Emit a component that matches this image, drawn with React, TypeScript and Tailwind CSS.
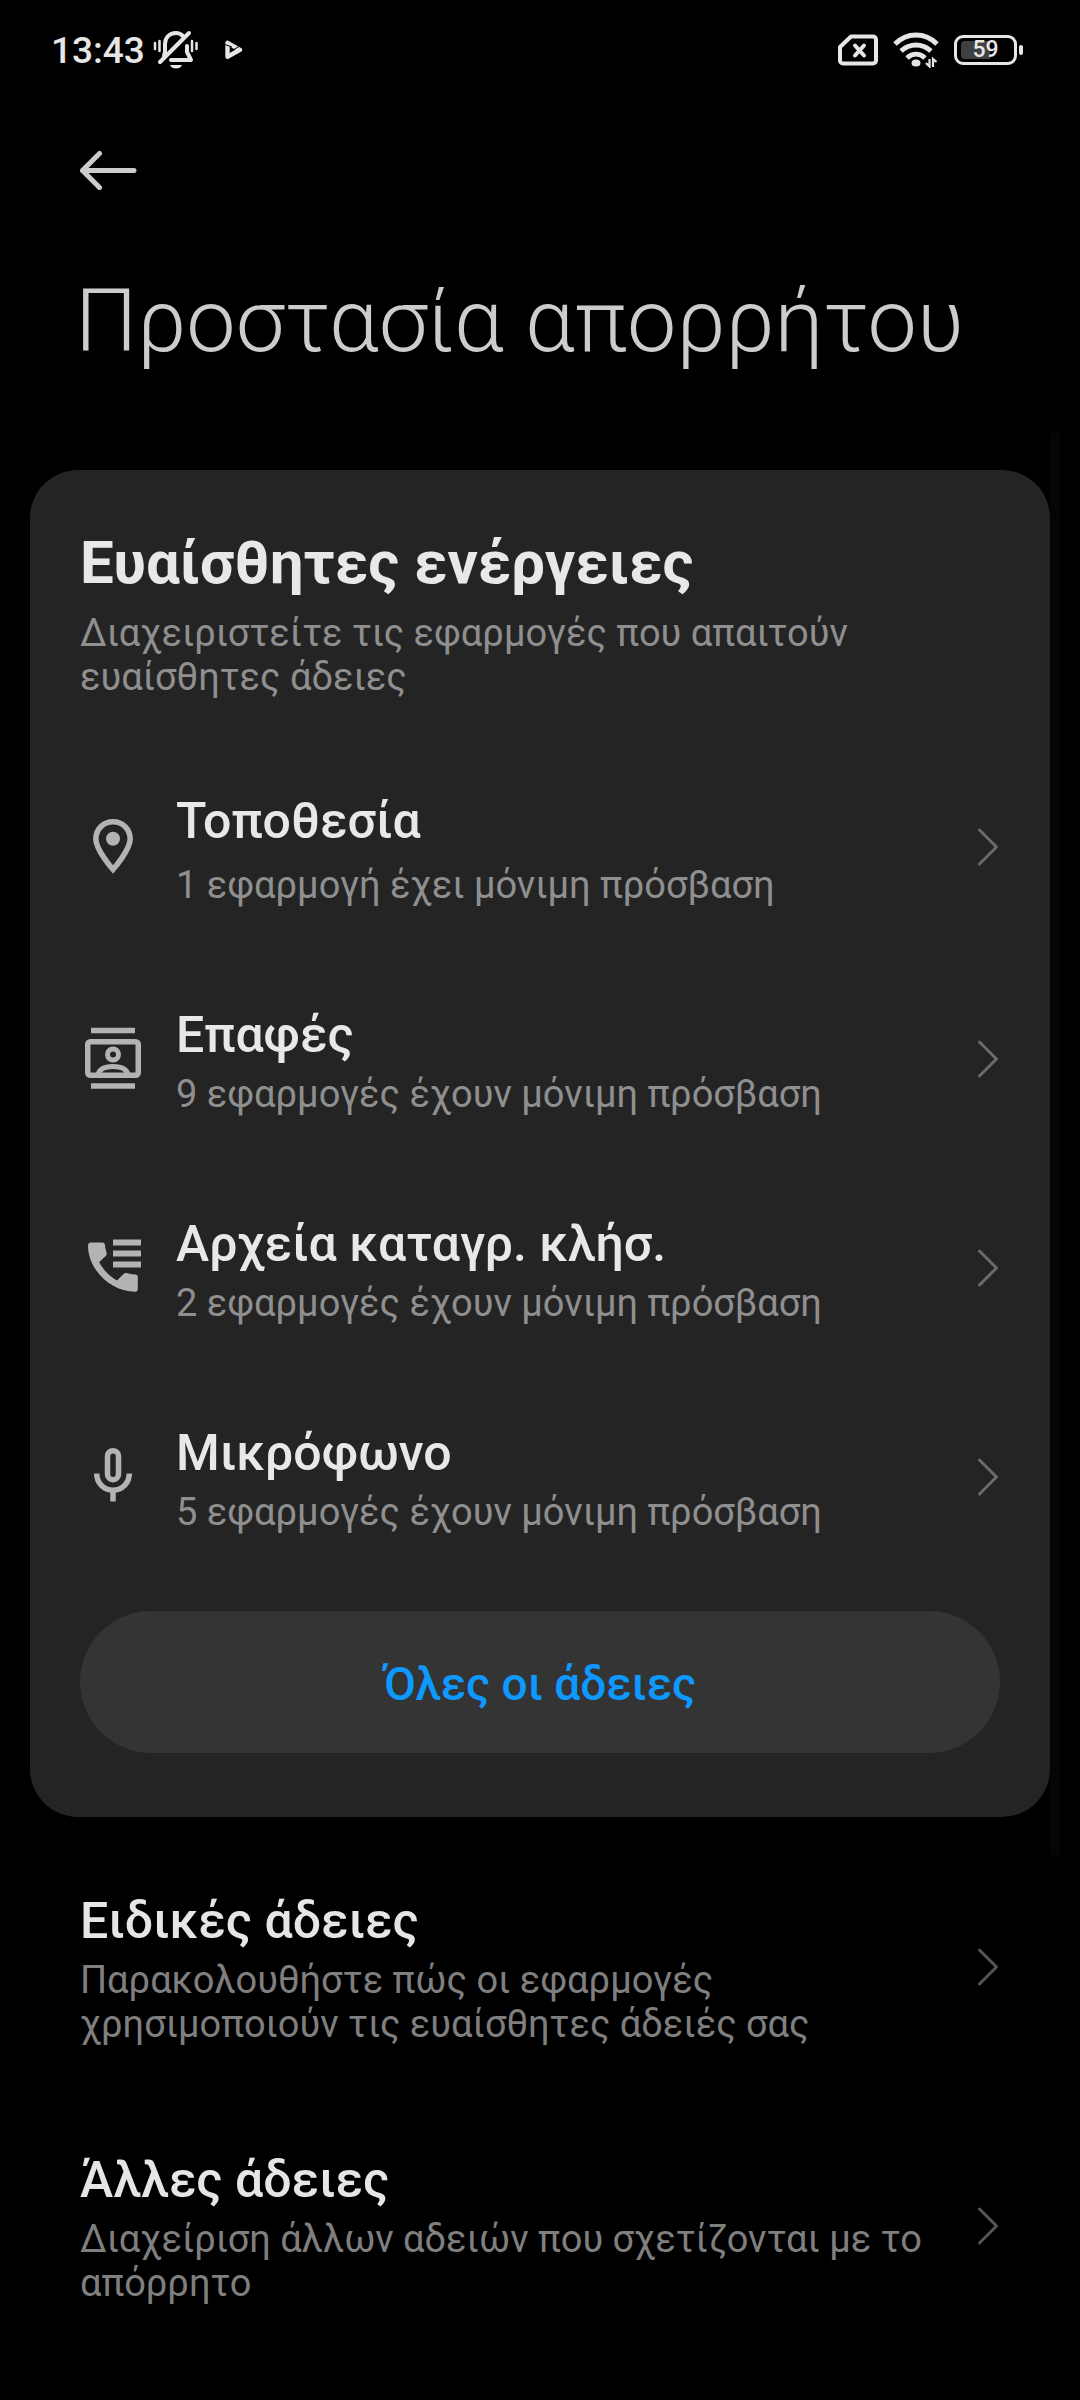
import type { ReactNode } from 'react';

interface Permission {
  title: string;
  summary: string;
  icon: ReactNode;
  spacing: string;
}

function LocationIcon() {
  return (
    <svg viewBox="0 0 66 66" className="size-[66px]" fill="none" aria-hidden="true">
      <path
        d="M33 7.700c-9.700 0-17.200 7.600-17.200 17.300 0 11 17.200 30.500 17.200 30.500s17.200-19.500 17.200-30.500c0-9.700-7.500-17.300-17.200-17.300z"
        stroke="currentColor"
        strokeWidth="5.5"
      />
      <circle cx="33" cy="24.700" r="7" fill="currentColor" />
    </svg>
  );
}

function ContactsIcon() {
  return (
    <svg viewBox="0 0 66 66" className="size-[66px]" fill="none" stroke="currentColor" strokeWidth="5.5" aria-hidden="true">
      <path d="M11 4.500h44M11 60h44" />
      <rect x="7.750" y="15.750" width="50.500" height="33.500" rx="2.500" />
      <circle cx="33" cy="28.500" r="5.500" strokeWidth="5" />
      <path d="M18 49c1-6 7-8.500 15-8.500S47 43 48 49" strokeWidth="5" />
    </svg>
  );
}

function CallLogIcon() {
  return (
    <svg viewBox="0 0 66 66" className="size-[66px]" fill="currentColor" aria-hidden="true">
      <path d="M11 7.500h11.500c1.300 0 2.200.9 2.400 2.200.3 2.800.9 5.600 1.700 8.300.3 1 0 2-.7 2.700l-6.700 6.600C23.500 35 29 41 37 45.500l6.800-6.700c.7-.7 1.800-1 2.800-.7 2.600.8 5.600 1.200 8.800 1.500 1.400.1 2.400 1.200 2.400 2.600V54c0 1.600-1 2.700-2.600 2.700C30 56.700 8 34 8 10.500c0-2 1.200-3 3-3z" />
      <path d="M33 4.500h28v6H33zM33 15.500h28v6H33zM33 26.500h28v6H33z" />
    </svg>
  );
}

function MicIcon() {
  return (
    <svg viewBox="0 0 66 66" className="size-[66px]" fill="none" stroke="currentColor" strokeWidth="5.5" aria-hidden="true">
      <rect x="27.500" y="6.700" width="11" height="29" rx="5.500" />
      <path d="M16.700 29.500c0 9.500 7 16.700 16.300 16.700s16.300-7.200 16.300-16.700M33 46v11.500" />
    </svg>
  );
}

const permissions: Permission[] = [
  {
    title: 'Τοποθεσία',
    summary: '1 εφαρμογή έχει μόνιμη πρόσβαση',
    icon: <LocationIcon />,
    spacing: 'gap-[13px] h-[214px]',
  },
  {
    title: 'Επαφές',
    summary: '9 εφαρμογές έχουν μόνιμη πρόσβαση',
    icon: <ContactsIcon />,
    spacing: 'gap-2 h-[209px]',
  },
  {
    title: 'Αρχεία καταγρ. κλήσ.',
    summary: '2 εφαρμογές έχουν μόνιμη πρόσβαση',
    icon: <CallLogIcon />,
    spacing: 'gap-2 h-[209px]',
  },
  {
    title: 'Μικρόφωνο',
    summary: '5 εφαρμογές έχουν μόνιμη πρόσβαση',
    icon: <MicIcon />,
    spacing: 'gap-2 h-[209px]',
  },
];

const otherSettings = [
  {
    title: 'Ειδικές άδειες',
    summary: 'Παρακολουθήστε πώς οι εφαρμογές χρησιμοποιούν τις ευαίσθητες άδειές σας',
  },
  {
    title: 'Άλλες άδειες',
    summary: 'Διαχείριση άλλων αδειών που σχετίζονται με το απόρρητο',
  },
];

function Chevron() {
  return (
    <svg viewBox="0 0 24 40" className="h-10 w-6 shrink-0" fill="none" aria-hidden="true">
      <path d="M3.500 3l17 17-17 17" stroke="currentColor" strokeWidth="3" strokeLinecap="round" strokeLinejoin="round" />
    </svg>
  );
}

function StatusBar() {
  return (
    <div className="flex h-[100px] items-center justify-between pl-[51px] pr-[57px] text-[#e6e6e6]">
      <div className="flex items-center">
        <span className="pt-0.5 text-[37px] font-medium leading-[44px]">13:43</span>
        {/* Silent mode */}
        <svg viewBox="0 0 46 40" className="ml-2 h-10 w-[46px]" fill="none" stroke="currentColor" strokeWidth="4" strokeLinecap="round" aria-hidden="true">
          <path d="M30 6C28 4 26 3 23 3c-7 0-11 5-11 11v8l-1 4M34 16v6l4 8H18" strokeLinejoin="round" />
          <path d="M36 3L7 32" />
          <path d="M2 13v6M6.500 11v10M39 11v10M43.500 13v6" strokeWidth="2.500" />
          <path d="M17 35h12c-1 2.500-3 3.500-6 3.500s-5-1-6-3.500z" fill="currentColor" stroke="none" />
        </svg>
        <svg viewBox="0 0 18 20" className="ml-[26px] h-5 w-[18px]" fill="none" aria-hidden="true">
          <path d="M2.500 2.800v13.900L15 9.800z" stroke="currentColor" strokeWidth="4.400" strokeLinejoin="round" />
          <path d="M0 4.500l7 2.500M8 10l6-3.500" stroke="#000000" strokeWidth="1" />
        </svg>
      </div>
      <div className="flex items-center gap-[15px]">
        {/* No SIM */}
        <svg viewBox="0 0 40 32" className="h-8 w-10" fill="none" stroke="currentColor" strokeWidth="4" strokeLinecap="round" strokeLinejoin="round" aria-hidden="true">
          <path d="M13 2.500h22a3 3 0 013 3v21a3 3 0 01-3 3H5a3 3 0 01-3-3V13z" />
          <path d="M17 11.500l9 10M26 11.500l-9 10" />
        </svg>
        <svg viewBox="0 0 46 36" className="h-9 w-[46px]" fill="none" stroke="currentColor" aria-hidden="true">
          <path d="M2 12c12-12 30-12 42 0M8 19c9-8 21-8 30 0M14 26c5.500-5 12.500-5 18 0" strokeWidth="5" />
          <ellipse cx="23" cy="31" rx="4.500" ry="3.500" fill="currentColor" stroke="none" />
          <path d="M33 31l3.500 3.500V27M43.500 30L40 27v8" strokeWidth="2.200" />
        </svg>
        <div className="flex items-center gap-0.5">
          <div className="flex h-[30px] w-[63px] items-center rounded-[9px] border-3 border-current px-1">
            <div className="flex h-[18px] w-full items-center justify-center rounded-sm bg-linear-to-r from-[#404040] from-59% to-transparent to-59%">
              <span className="text-[23px] font-medium leading-[22px]">59</span>
            </div>
          </div>
          <div className="h-[10px] w-1 rounded-full bg-current" />
        </div>
      </div>
    </div>
  );
}

export default function App() {
  return (
    <div className="relative min-h-screen bg-black pb-[60px] font-['Roboto',sans-serif]">
      <StatusBar />

      <header className="px-[75px] text-[#cccccc]">
        <button aria-label="Πίσω" className="mt-[50px] block pl-[5px]">
          <svg viewBox="0 0 57 40" className="h-10 w-[57px]" fill="none" stroke="currentColor" strokeWidth="5" strokeLinecap="round" strokeLinejoin="round" aria-hidden="true">
            <path d="M19.500 3.500L2.500 20.500l17 17M2.500 20.500H54" />
          </svg>
        </button>
        <h1 className="mt-[79px] text-[88px] font-light leading-[104px]">Προστασία απορρήτου</h1>
      </header>

      <main>
        <section className="mx-[30px] mt-[97px] rounded-[48px] bg-[#242424] px-[50px] pb-[64px] pt-[58px]">
          <h2 className="text-[60px] font-bold leading-[70px] text-[#e8e8e8]">Ευαίσθητες ενέργειες</h2>
          <p className="mt-[13px] text-[38px] leading-[44px] text-[#8f8f8f]">
            Διαχειριστείτε τις εφαρμογές που απαιτούν ευαίσθητες άδειες
          </p>

          <ul className="mt-[41px]">
            {permissions.map((item) => (
              <li key={item.title}>
                <button className="flex w-full items-center text-left text-[#6b6b6b]">
                  <span className="mr-[30px] shrink-0 text-[#b3b3b3]">{item.icon}</span>
                  <span className={`flex min-w-0 flex-1 flex-col justify-center pt-1 ${item.spacing}`}>
                    <span className="text-[50px] font-medium leading-[58px] text-[#e8e8e8]">{item.title}</span>
                    <span className="text-[38px] leading-[44px] text-[#8f8f8f]">{item.summary}</span>
                  </span>
                  <Chevron />
                </button>
              </li>
            ))}
          </ul>

          <button className="mt-[30px] h-[142px] w-full rounded-full bg-[#343434] pt-1 text-[46px] font-medium text-[#0d99ff]">
            Όλες οι άδειες
          </button>
        </section>

        <ul className="mt-5 px-20">
          {otherSettings.map((item) => (
            <li key={item.title}>
              <button className="flex h-[259px] w-full items-center gap-10 text-left text-[#555555]">
                <span className="flex min-w-0 flex-1 flex-col gap-2 pt-1">
                  <span className="text-[50px] font-medium leading-[58px] text-[#e5e5e5]">{item.title}</span>
                  <span className="text-[38px] leading-[44px] text-[#7f7f7f]">{item.summary}</span>
                </span>
                <Chevron />
              </button>
            </li>
          ))}
        </ul>
      </main>

      {/* Scroll thumb, lies over the list */}
      <div className="absolute right-5 top-[430px] h-[1427px] w-[10px] rounded-full bg-[#050505]" />
    </div>
  );
}
